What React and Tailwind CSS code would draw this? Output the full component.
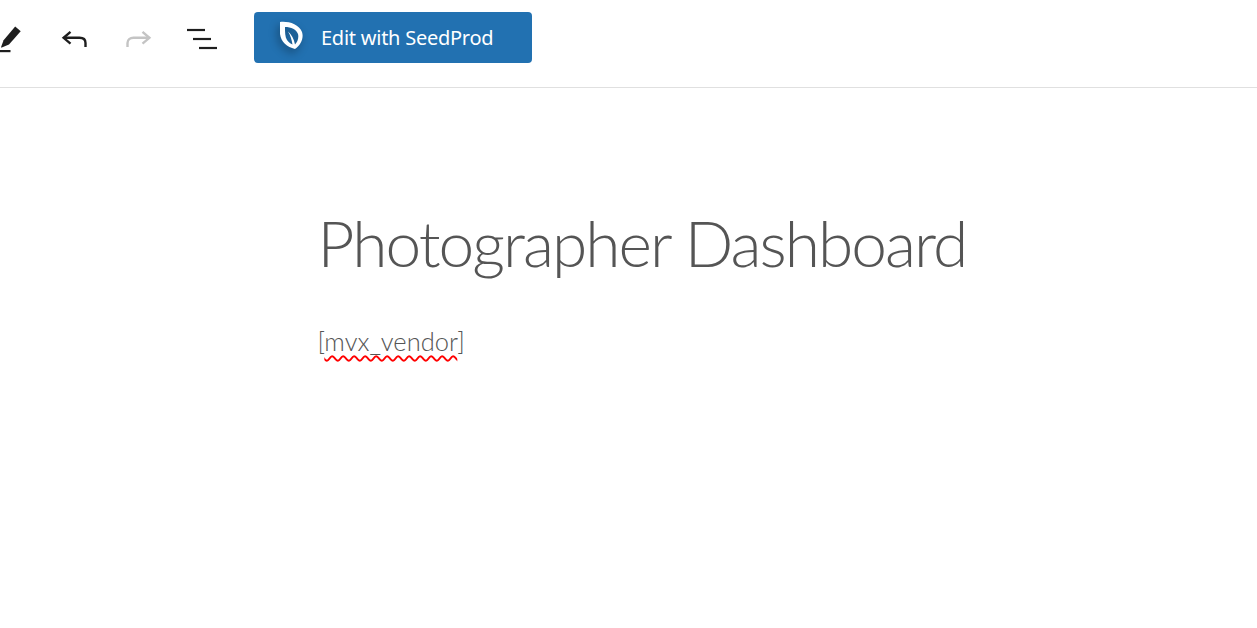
import React from 'react';

const ToolbarIcon = ({ children }) => (
  <button className="flex h-12 w-12 shrink-0 items-center justify-center">
    {children}
  </button>
);

const App = () => {
  return (
    <div className="h-[628px] w-full overflow-hidden bg-white font-['Noto_Sans',sans-serif]">
      {/* Top toolbar */}
      <div className="flex h-[88px] items-center border-b border-[#e0e0e0] pb-[12px]">
        <div className="ml-[-14px] flex items-center gap-4">
          <ToolbarIcon>
            <svg width="48" height="48" viewBox="0 0 48 48" fill="none">
              <path d="M29.2 12.5 L34.7 17.2 L23 30.6 L15.8 33.6 C15.3 33.8 15 33.4 15.1 33 L17.6 26.2 Z" fill="#1e1e1e" />
              <rect x="10" y="36" width="14.5" height="2.2" fill="#1e1e1e" />
            </svg>
          </ToolbarIcon>
          <ToolbarIcon>
            <svg width="28" height="28" viewBox="0 0 28 28" fill="none" stroke="#1e1e1e" strokeWidth="2.4" className="translate-y-[3px]">
              <path d="M10.5 4.8 L3.6 10.8 L10.5 16.6" />
              <path d="M3.8 10.8 H19.5 C23 10.8 25.5 12.6 25.5 16 V20" />
            </svg>
          </ToolbarIcon>
          <ToolbarIcon>
            <svg width="28" height="28" viewBox="0 0 28 28" fill="none" stroke="#c4c4c4" strokeWidth="2.4" className="translate-x-[1px] translate-y-[3px]">
              <path d="M17.5 4.8 L24.4 10.8 L17.5 16.6" />
              <path d="M24.2 10.8 H8.5 C5 10.8 2.5 12.6 2.5 16 V20" />
            </svg>
          </ToolbarIcon>
          <ToolbarIcon>
            <svg width="32" height="24" viewBox="0 0 32 24" fill="none" stroke="#1e1e1e" strokeWidth="2.2" className="translate-y-[2px]">
              <path d="M1 2 H19" />
              <path d="M7 11 H25" />
              <path d="M13 20 H31" />
            </svg>
          </ToolbarIcon>
        </div>
        <button className="ml-[28px] flex h-[51px] w-[278px] items-center rounded-[4px] bg-[#2271b1] pl-[24px] text-[20px] tracking-[-0.25px] text-white">
          <svg width="28" height="30" viewBox="0 0 28 30" className="mr-[15px] mt-[-6px] drop-shadow-[-2px_4px_4px_rgba(0,0,0,0.35)]">
            <path fillRule="evenodd" d="M2 2 C10 1 21 4 24 12 C26 18 23 25 17 29 C9 27 3 22 2 14 Z M7 7 C7 12 7 17 9 20 C10.500 22 12.500 23.500 14.500 24.500 C13.800 20 12.500 15.500 10 11.500 C13.500 14.500 16 19 17 24.500 C19.500 22 21 18 20 14 C18.500 9.500 13 7 7 7 Z" fill="#fff" />
          </svg>
          <span>Edit with SeedProd</span>
        </button>
      </div>

      {/* Editor canvas */}
      <div className="mx-auto w-[622px] pt-[113px]">
        <h1 className="whitespace-nowrap text-[64px] leading-[84px] font-light tracking-[-1.95px] text-[#555555] font-['Lato',sans-serif]">
          Photographer Dashboard
        </h1>
        <p className="mt-[39px] text-[25.5px] leading-[34px] font-light text-[#555555] font-['Lato',sans-serif]">
          [<span className="underline decoration-wavy decoration-[#ff0000] decoration-[1.5px] underline-offset-[4px]">mvx_vendor</span>]
        </p>
      </div>
    </div>
  );
};

export default App;
